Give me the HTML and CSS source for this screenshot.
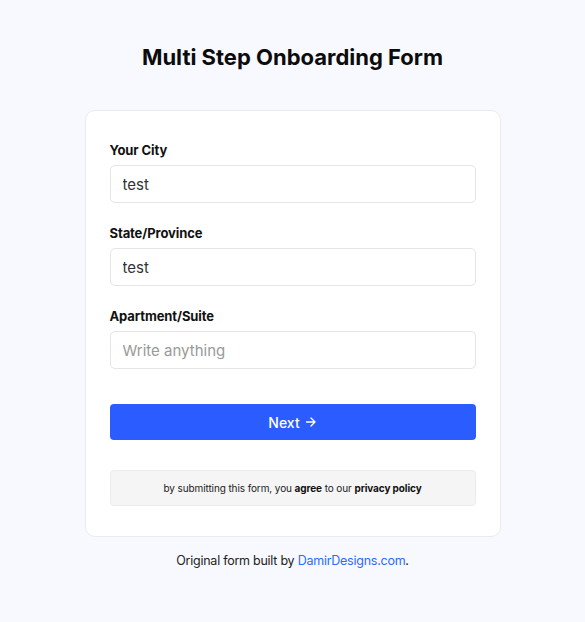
FILE: index.html
```html
<!DOCTYPE html>
<html lang="en">
<head>
<meta charset="utf-8">
<title>Multi Step Onboarding Form</title>
<link rel="stylesheet" href="styles.css">
</head>
<body>
<main class="page">
  <h1 class="title">Multi Step Onboarding Form</h1>
  <form class="card">
    <div class="field">
      <label class="label" for="city">Your City</label>
      <input class="input" id="city" type="text" value="test">
    </div>
    <div class="field">
      <label class="label" for="state">State/Province</label>
      <input class="input" id="state" type="text" value="test">
    </div>
    <div class="field">
      <label class="label" for="apt">Apartment/Suite</label>
      <input class="input" id="apt" type="text" placeholder="Write anything">
    </div>
    <button class="btn" type="button">Next <svg class="arrow" width="12" height="12" viewBox="0 0 12 12" aria-hidden="true"><path d="M1.5 6h8.5M6 2l4 4-4 4" fill="none" stroke="#fff" stroke-width="1.4" stroke-linecap="round" stroke-linejoin="round"/></svg></button>
    <p class="notice">by submitting this form, you <b>agree</b> to our <b>privacy policy</b></p>
  </form>
  <p class="footer">Original form built by <a class="link" href="#">DamirDesigns.com</a>.</p>
</main>
</body>
</html>
```
FILE: styles.css
```css
* { box-sizing: border-box; }
html, body { margin: 0; padding: 0; }
body {
  background: #f8f9fe;
  font-family: "Inter", "Noto Sans", sans-serif;
  color: #111;
}
.page {
  display: flex;
  flex-direction: column;
  align-items: center;
  padding-top: 42px;
}
.title {
  margin: 0;
  font-size: 22px;
  line-height: 30px;
  font-weight: 700;
  letter-spacing: 0;
  color: #0c0c0c;
}
.card {
  margin-top: 38px;
  width: 416px;
  background: #fff;
  border: 1px solid #ebebef;
  border-radius: 10px;
  padding: 30px 24px 30px 24px;
  display: flex;
  flex-direction: column;
}
.field {
  display: flex;
  flex-direction: column;
  margin-bottom: 21px;
}
.field:nth-of-type(3) { margin-bottom: 35px; }
.label {
  font-size: 13px;
  line-height: 18px;
  font-weight: 700;
  letter-spacing: -0.1px;
  color: #111;
  margin-bottom: 6px;
}
.input {
  height: 38px;
  border: 1px solid #e5e5e8;
  border-radius: 5px;
  padding: 0 12px;
  font-family: "Inter", sans-serif;
  font-size: 15px;
  color: #333;
  background: #fff;
  outline: none;
}
.input::placeholder { color: #999; }
.btn {
  height: 36px;
  border: none;
  border-radius: 4px;
  background: #2b5cff;
  color: #fff;
  font-family: "Inter", sans-serif;
  font-size: 14px;
  font-weight: 500;
  display: flex;
  align-items: center;
  justify-content: center;
  gap: 5px;
  cursor: pointer;
}
.arrow { display: block; }
.notice {
  margin: 30px 0 0 0;
  height: 36px;
  display: flex;
  align-items: center;
  justify-content: center;
  background: #f5f5f5;
  border: 1px solid #ebebeb;
  border-radius: 4px;
  font-size: 10px;
  letter-spacing: -0.1px;
  color: #222;
  white-space: pre;
}
.notice b { font-weight: 700; color: #111; }
.footer {
  margin: 15px 0 0 0;
  font-size: 12.5px;
  line-height: 18px;
  letter-spacing: -0.25px;
  color: #222;
}
.link { color: #2b6bff; text-decoration: none; }
```
